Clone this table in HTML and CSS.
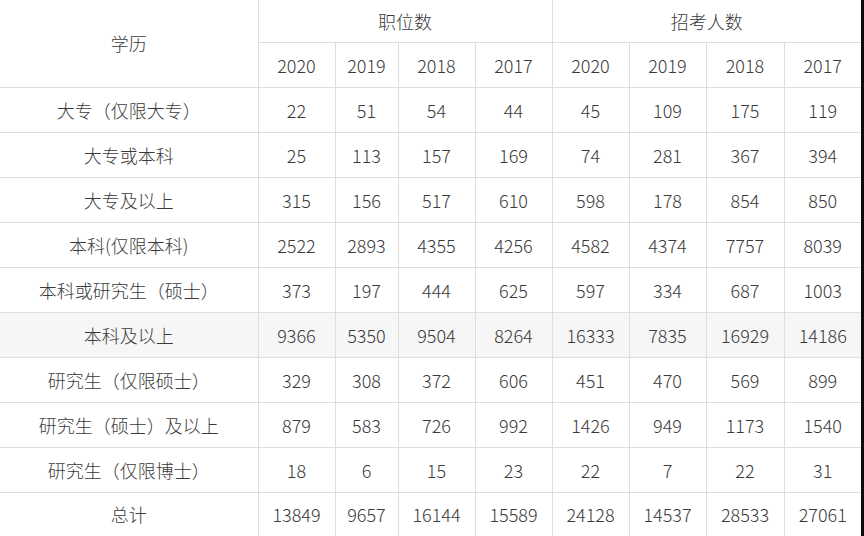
FILE: index.html
```html
<!DOCTYPE html>
<html lang="zh">
<head>
<meta charset="utf-8">
<link rel="stylesheet" href="styles.css">
</head>
<body>
<table class="tbl">
  <colgroup>
    <col class="c0"><col class="c1"><col class="c2"><col class="c1"><col class="c1"><col class="c1"><col class="c1"><col class="c3"><col class="c4">
  </colgroup>
  <tr class="h1">
    <td rowspan="2">学历</td>
    <td colspan="4">职位数</td>
    <td colspan="4" class="last">招考人数</td>
  </tr>
  <tr class="h2">
    <td>2020</td><td>2019</td><td>2018</td><td>2017</td>
    <td>2020</td><td>2019</td><td>2018</td><td class="last">2017</td>
  </tr>
  <tr><td>大专（仅限大专）</td><td>22</td><td>51</td><td>54</td><td>44</td><td>45</td><td>109</td><td>175</td><td class="last">119</td></tr>
  <tr><td>大专或本科</td><td>25</td><td>113</td><td>157</td><td>169</td><td>74</td><td>281</td><td>367</td><td class="last">394</td></tr>
  <tr><td>大专及以上</td><td>315</td><td>156</td><td>517</td><td>610</td><td>598</td><td>178</td><td>854</td><td class="last">850</td></tr>
  <tr><td>本科(仅限本科)</td><td>2522</td><td>2893</td><td>4355</td><td>4256</td><td>4582</td><td>4374</td><td>7757</td><td class="last">8039</td></tr>
  <tr><td>本科或研究生（硕士）</td><td>373</td><td>197</td><td>444</td><td>625</td><td>597</td><td>334</td><td>687</td><td class="last">1003</td></tr>
  <tr class="hl"><td>本科及以上</td><td>9366</td><td>5350</td><td>9504</td><td>8264</td><td>16333</td><td>7835</td><td>16929</td><td class="last">14186</td></tr>
  <tr><td>研究生（仅限硕士）</td><td>329</td><td>308</td><td>372</td><td>606</td><td>451</td><td>470</td><td>569</td><td class="last">899</td></tr>
  <tr><td>研究生（硕士）及以上</td><td>879</td><td>583</td><td>726</td><td>992</td><td>1426</td><td>949</td><td>1173</td><td class="last">1540</td></tr>
  <tr><td>研究生（仅限博士）</td><td>18</td><td>6</td><td>15</td><td>23</td><td>22</td><td>7</td><td>22</td><td class="last">31</td></tr>
  <tr class="end"><td>总计</td><td>13849</td><td>9657</td><td>16144</td><td>15589</td><td>24128</td><td>14537</td><td>28533</td><td class="last">27061</td></tr>
</table>
</body>
</html>
```
FILE: styles.css
```css
html, body {
  margin: 0;
  padding: 0;
  background: #0d0d0d;
  width: 864px;
  height: 536px;
  overflow: hidden;
}
.tbl {
  border-collapse: collapse;
  table-layout: fixed;
  width: 861px;
  background: #ffffff;
  font-family: "Noto Sans CJK SC", "Microsoft YaHei", sans-serif;
  font-size: 18px;
  font-weight: 300;
  color: #3a3a3a;
}
.c0 { width: 258px; }
.c1 { width: 77px; }
.c2 { width: 63px; }
.c3 { width: 78px; }
.c4 { width: 77px; }
.tbl td {
  border: 1px solid #dedede;
  text-align: center;
  vertical-align: middle;
  padding: 0;
  line-height: 20px;
}
.tbl tr td:first-child { border-left: none; }
.tbl tr:first-child td { border-top: none; }
.tbl td.last { border-right: none; }
.tbl tr.end td { border-bottom: none; }
.tbl tr { height: 45px; }
.tbl tr.h1 { height: 42px; }
.tbl tr.end { height: 44px; }
.tbl tr.hl td { background: #f6f6f6; }
```
